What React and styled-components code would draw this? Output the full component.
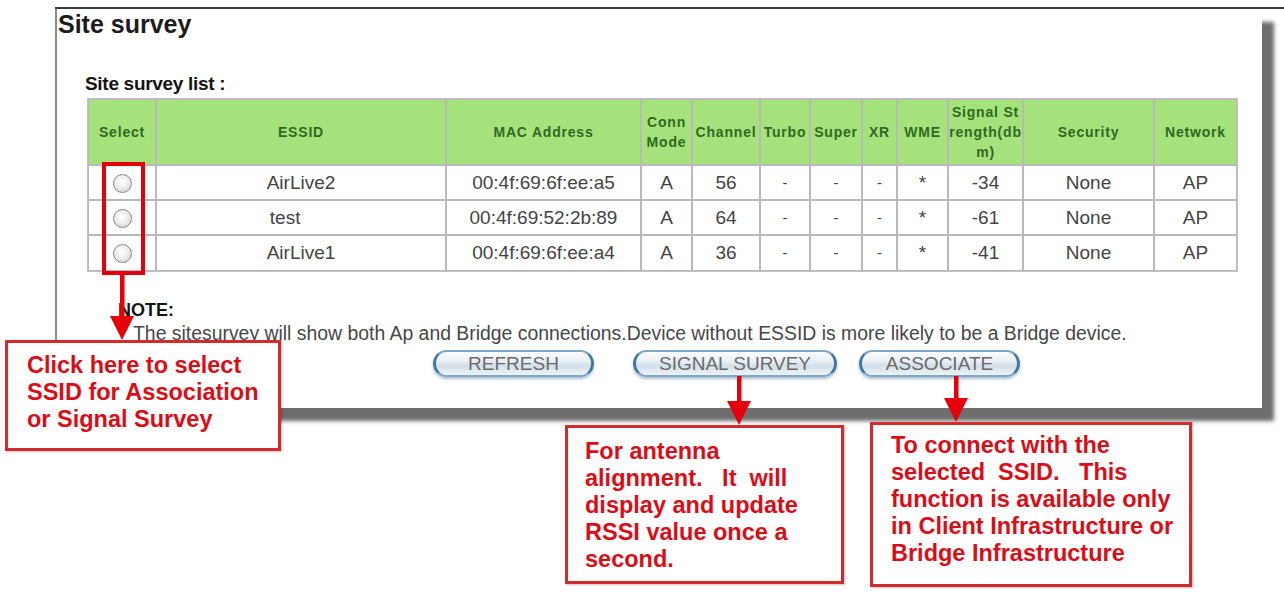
import React from "react";
import styled, { createGlobalStyle } from "styled-components";

// page data
const rows = [
  { essid: "AirLive2", mac: "00:4f:69:6f:ee:a5", mode: "A", channel: "56", signal: "-34" },
  { essid: "test\u00a0\u00a0\u00a0\u00a0\u00a0\u00a0", mac: "00:4f:69:52:2b:89", mode: "A", channel: "64", signal: "-61" },
  { essid: "AirLive1", mac: "00:4f:69:6f:ee:a4", mode: "A", channel: "36", signal: "-41" },
];

const colWidths = [68, 290, 195, 51, 68, 50, 52, 35, 51, 75, 131, 83];

const Arrow = ({ x, top, length }) => (
  <ArrowBox $x={x} $top={top} width="26" height={length} viewBox={`0 0 26 ${length}`}>
    <rect x="11" y="0" width="4.5" height={length - 22} fill="#e6000a" />
    <polygon points={`1,${length - 24} 25,${length - 24} 13,${length}`} fill="#e6000a" />
  </ArrowBox>
);

const App = () => {
  return (
    <Stage>
      <GlobalStyle />
      <Frame>
        <Panel>
          <Title>Site survey</Title>
          <Body>
            <ListLabel>Site survey list :</ListLabel>
            <SurveyTable>
              <colgroup>
                {colWidths.map((w, i) => (
                  <col key={i} style={{ width: w }} />
                ))}
              </colgroup>
              <thead>
                <HeadRow>
                  <Th>Select</Th>
                  <Th>ESSID</Th>
                  <Th>MAC Address</Th>
                  <Th>Conn<br />Mode</Th>
                  <Th>Channel</Th>
                  <Th>Turbo</Th>
                  <Th>Super</Th>
                  <Th>XR</Th>
                  <Th>WME</Th>
                  <Th>Signal St<br />rength(db<br />m)</Th>
                  <Th>Security</Th>
                  <Th>Network</Th>
                </HeadRow>
              </thead>
              <tbody>
                {rows.map((r, i) => (
                  <BodyRow key={i} $last={i === rows.length - 1}>
                    <Td><Radio type="radio" name="ssid" /></Td>
                    <Td>{r.essid}</Td>
                    <Td>{r.mac}</Td>
                    <Td>{r.mode}</Td>
                    <Td>{r.channel}</Td>
                    <Td $small>-</Td>
                    <Td $small>-</Td>
                    <Td $small>-</Td>
                    <Td $star>*</Td>
                    <Td>{r.signal}</Td>
                    <Td>None</Td>
                    <Td>AP</Td>
                  </BodyRow>
                ))}
              </tbody>
            </SurveyTable>
            <NoteHead>NOTE:</NoteHead>
            <NoteText>
              The sitesurvey will show both Ap and Bridge connections.Device without ESSID is more likely to be a Bridge device.
            </NoteText>
            <ButtonRow>
              <PillButton $w={161}>REFRESH</PillButton>
              <PillButton $w={204} $gap={39}>SIGNAL SURVEY</PillButton>
              <PillButton $w={161} $gap={22}>ASSOCIATE</PillButton>
            </ButtonRow>
          </Body>
        </Panel>
      </Frame>

      {/* annotations over the screenshot */}
      <SelectMark />
      <Arrow x={109} top={275} length={65} />
      <Arrow x={726} top={376} length={49} />
      <Arrow x={943} top={376} length={46} />

      <Callout $x={5} $y={340} $w={276} $h={111} $pt={9} $pl={19}>
        {"Click here to select\nSSID for Association\nor Signal Survey"}
      </Callout>
      <Callout $x={565} $y={425} $w={279} $h={159} $pt={10} $pl={17}>
        {"For antenna\nalignment.   It  will\ndisplay and update\nRSSI value once a\nsecond."}
      </Callout>
      <Callout $x={870} $y={422} $w={322} $h={165} $pt={7} $pl={18}>
        {"To connect with the\nselected  SSID.   This\nfunction is available only\nin Client Infrastructure or\nBridge Infrastructure"}
      </Callout>
    </Stage>
  );
};

// 스타일 영역
const GlobalStyle = createGlobalStyle`
  body {
    margin: 0;
    background: #ffffff;
    font-family: "Liberation Sans", Arial, sans-serif;
  }
`;

const Stage = styled.div`
  position: relative;
  width: 1284px;
  height: 596px;
  overflow: hidden;
  padding-top: 7px;
  box-sizing: border-box;
  background: #ffffff;
`;

const Frame = styled.div`
  margin-left: 55px;
  border-top: 2px solid #3a3a3a;
`;

const Panel = styled.div`
  box-sizing: border-box;
  width: 1207px;
  height: 399px;
  border-left: 2px solid #8c8c8c;
  background: #ffffff;
  box-shadow: 12px 13px 4px rgba(60, 60, 60, 0.75);
`;

const Title = styled.div`
  padding-left: 1px;
  font-size: 25px;
  font-weight: bold;
  line-height: 30px;
  color: #1c1c1c;
`;

const Body = styled.div`
  padding-left: 28px;
`;

const ListLabel = styled.div`
  margin-top: 34px;
  font-size: 19px;
  font-weight: bold;
  line-height: 22px;
  letter-spacing: -0.3px;
  color: #141414;
`;

const SurveyTable = styled.table`
  margin: 3px 0 0 2px;
  width: 1151px;
  table-layout: fixed;
  border-collapse: separate;
  border-spacing: 0;
  border: 1px solid #c2c2c2;
`;

const HeadRow = styled.tr`
  height: 66px;
`;

const BodyRow = styled.tr`
  height: ${(p) => (p.$last ? "36px" : "35px")};
`;

const Th = styled.th`
  padding: 0;
  border: 1px solid #b9b9b9;
  background: #a6e27c;
  color: #2f6a20;
  font-size: 14px;
  font-weight: bold;
  letter-spacing: 0.8px;
  line-height: 20px;
  white-space: nowrap;
  text-align: center;
  vertical-align: middle;
`;

const Td = styled.td`
  padding: 0;
  border: 1px solid #b9b9b9;
  color: #444444;
  font-size: ${(p) => (p.$small ? "15px" : "19px")};
  line-height: 20px;
  text-align: center;
  vertical-align: ${(p) => (p.$star ? "top" : "middle")};
  padding-top: ${(p) => (p.$star ? "7px" : "0")};
  white-space: nowrap;
`;

const Radio = styled.input`
  appearance: none;
  display: inline-block;
  margin: 0;
  width: 19px;
  height: 19px;
  border-radius: 50%;
  border: 1.5px solid #8a8a8a;
  background: radial-gradient(circle at 45% 40%, #ffffff 0%, #eeeeee 45%, #c6c6c6 100%);
  vertical-align: middle;
  box-sizing: border-box;
`;

const NoteHead = styled.div`
  margin: 27px 0 0 33px;
  font-size: 18px;
  font-weight: bold;
  line-height: 23px;
  color: #151515;
`;

const NoteText = styled.div`
  margin-left: 48px;
  font-size: 19.4px;
  line-height: 23px;
  color: #474747;
  white-space: nowrap;
`;

const ButtonRow = styled.div`
  display: flex;
  margin: 5px 0 0 348px;
`;

const PillButton = styled.button`
  box-sizing: border-box;
  width: ${(p) => p.$w}px;
  height: 27px;
  margin-left: ${(p) => p.$gap || 0}px;
  padding: 0;
  border-radius: 14px;
  border: 2px solid #7ea7c8;
  border-left: 3px solid #3f76a6;
  border-right: 3px solid #3f76a6;
  background: linear-gradient(to bottom, #fcfdfe 0%, #e9f0f5 40%, #d3dfe8 60%, #eef3f7 100%);
  box-shadow: 0 2px 3px rgba(70, 110, 150, 0.45);
  color: #6a6a6a;
  font-family: "Liberation Sans", Arial, sans-serif;
  font-size: 19px;
  line-height: 22px;
`;

const SelectMark = styled.div`
  position: absolute;
  left: 102px;
  top: 162px;
  width: 43px;
  height: 113px;
  box-sizing: border-box;
  border: 4px solid #e3000b;
`;

const ArrowBox = styled.svg`
  position: absolute;
  left: ${(p) => p.$x}px;
  top: ${(p) => p.$top}px;
  display: block;
`;

const Callout = styled.div`
  position: absolute;
  left: ${(p) => p.$x}px;
  top: ${(p) => p.$y}px;
  width: ${(p) => p.$w}px;
  height: ${(p) => p.$h}px;
  box-sizing: border-box;
  padding: ${(p) => p.$pt}px 0 0 ${(p) => p.$pl}px;
  border: 3px solid #d32a2c;
  background: #ffffff;
  box-shadow: 1px 1px 2px rgba(0, 0, 0, 0.25);
  color: #dc0c16;
  font-size: 23.5px;
  font-weight: bold;
  line-height: 27px;
  white-space: pre;
`;

export default App;
